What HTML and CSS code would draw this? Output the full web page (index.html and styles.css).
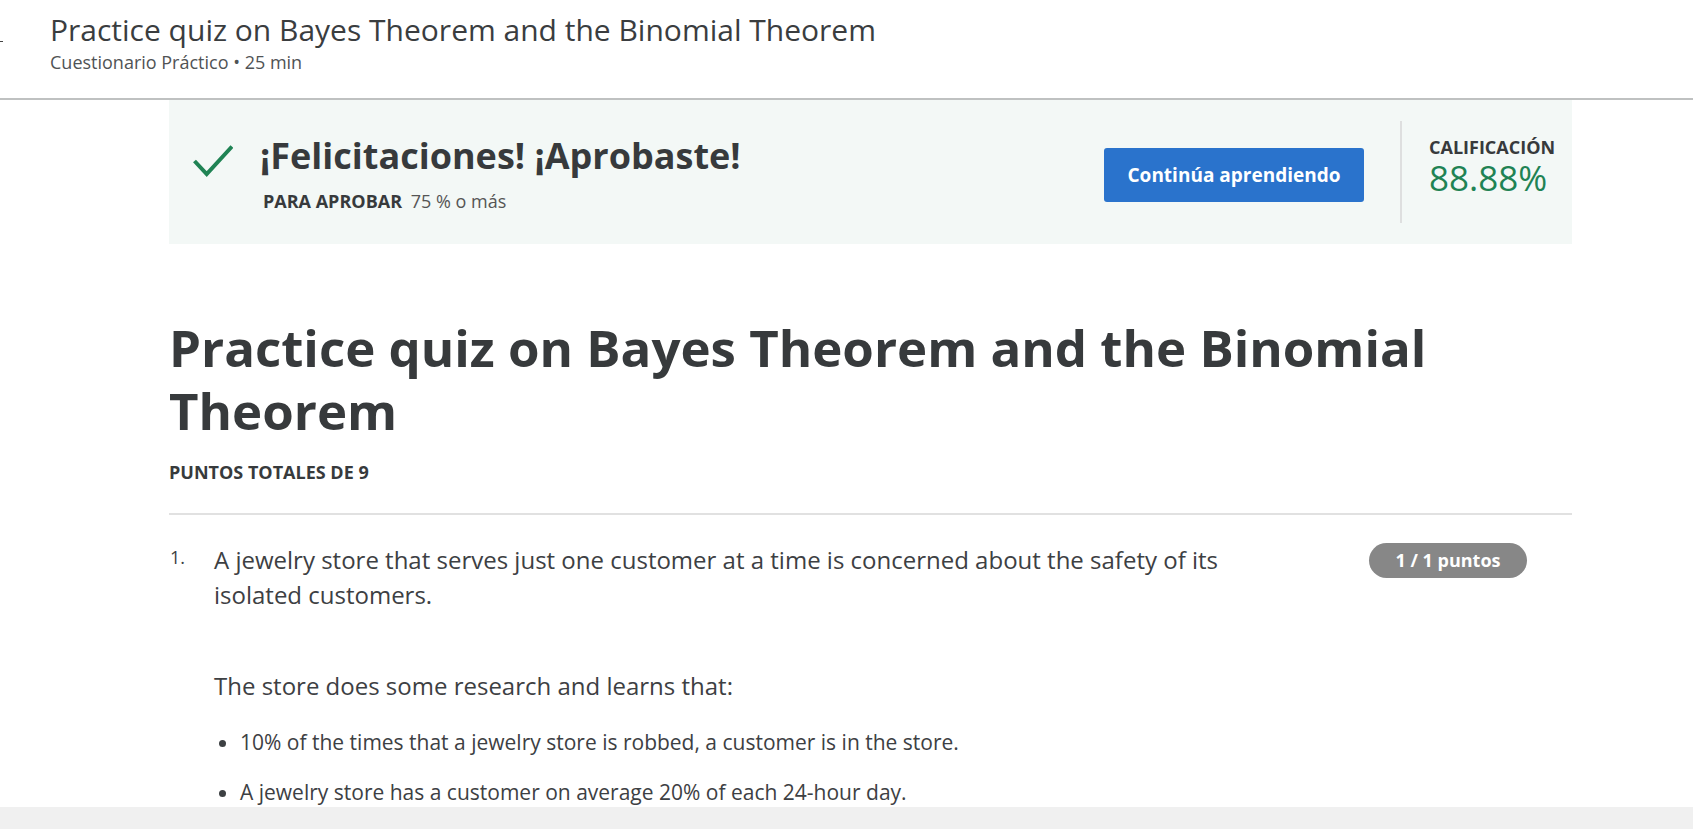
FILE: index.html
```html
<!DOCTYPE html>
<html lang="es">
<head>
<meta charset="utf-8">
<title>Practice quiz on Bayes Theorem and the Binomial Theorem</title>
<link rel="stylesheet" href="styles.css">
</head>
<body>
<div class="page">
  <header class="topbar">
    <span class="back-stub"></span>
    <div class="topbar-text">
      <h2 class="topbar-title">Practice quiz on Bayes Theorem and the Binomial Theorem</h2>
      <div class="topbar-sub">Cuestionario Práctico • 25 min</div>
    </div>
  </header>

  <main class="content">
    <section class="banner">
      <div class="banner-main">
        <svg class="check" width="40" height="32" viewBox="0 0 40 32" aria-hidden="true">
          <polyline points="1.5,16 13.7,29 39,1.5" fill="none" stroke="#1f8354" stroke-width="4"/>
        </svg>
        <div class="banner-text">
          <h3 class="banner-title">¡Felicitaciones! ¡Aprobaste!</h3>
          <div class="banner-pass"><span class="pass-label">PARA APROBAR</span> 75 % o más</div>
        </div>
      </div>
      <button class="btn-primary" type="button">Continúa aprendiendo</button>
      <div class="banner-divider"></div>
      <div class="grade">
        <div class="grade-label">CALIFICACIÓN</div>
        <div class="grade-value">88.88%</div>
      </div>
    </section>

    <h1 class="quiz-title">Practice quiz on Bayes Theorem and the Binomial Theorem</h1>
    <div class="total-points">PUNTOS TOTALES DE 9</div>
    <hr class="rule">

    <div class="question">
      <div class="q-num">1.</div>
      <div class="q-body">
        <p class="q-text">A jewelry store that serves just one customer at a time is concerned about the safety of its isolated customers.</p>
        <p class="q-text q-para">The store does some research and learns that:</p>
        <ul class="q-list">
          <li>10% of the times that a jewelry store is robbed, a customer is in the store.</li>
          <li>A jewelry store has a customer on average 20% of each 24-hour day.</li>
        </ul>
      </div>
      <div class="q-badge">1 / 1 puntos</div>
    </div>
  </main>

  <footer class="bottom-bar"></footer>
</div>
</body>
</html>
```

FILE: styles.css
```css
* { box-sizing: border-box; }

html, body {
  margin: 0;
  padding: 0;
  height: 100%;
}

body {
  font-family: "Open Sans", "Noto Sans", sans-serif;
  color: #373a3c;
  background: #fff;
  overflow: hidden;
}

.page {
  height: 100vh;
  display: flex;
  flex-direction: column;
}

/* Top bar */
.topbar {
  flex: none;
  height: 100px;
  border-bottom: 2px solid #bfc1c1;
  display: flex;
  align-items: flex-start;
}

.back-stub {
  width: 3px;
  height: 1px;
  background: #444;
  margin-top: 41px;
}

.topbar-text {
  margin-left: 47px;
  padding-top: 12px;
}

.topbar-title {
  margin: 0;
  font-size: 30px;
  line-height: 36px;
  font-weight: 400;
  color: #3a3d3f;
}

.topbar-sub {
  margin-top: 3px;
  font-size: 18px;
  line-height: 22px;
  color: #505355;
}

/* Content column */
.content {
  flex: 1;
  overflow: hidden;
  width: 1403px;
  margin-left: 169px;
}

/* Banner */
.banner {
  height: 144px;
  background: #f3f8f6;
  display: flex;
  align-items: center;
  padding-left: 24px;
}

.banner-main {
  flex: 1;
  display: flex;
  align-items: flex-start;
}

.check {
  flex: none;
  margin-top: 12px;
}

.banner-text {
  margin-left: 27px;
}

.banner-title {
  margin: 0;
  font-size: 36px;
  line-height: 46px;
  font-weight: 700;
  color: #373a3c;
}

.banner-pass {
  margin-top: 11px;
  padding-left: 3px;
  font-size: 18px;
  line-height: 22px;
  color: #555;
}

.pass-label {
  font-weight: 700;
  color: #373a3c;
  margin-right: 4px;
}

.btn-primary {
  flex: none;
  width: 260px;
  height: 54px;
  margin-top: 6px;
  border: none;
  border-radius: 3px;
  background: #2a73cc;
  color: #fff;
  font-family: inherit;
  font-size: 19px;
  font-weight: 700;
}

.banner-divider {
  flex: none;
  width: 2px;
  height: 102px;
  margin-left: 36px;
  background: #dedfdf;
}

.grade {
  flex: none;
  width: 170px;
  padding-left: 27px;
  padding-bottom: 11px;
}

.grade-label {
  font-size: 18px;
  line-height: 22px;
  font-weight: 700;
  color: #373a3c;
}

.grade-value {
  font-size: 35px;
  line-height: 40px;
  color: #1f8354;
}

/* Title */
.quiz-title {
  margin: 72px 0 0;
  font-size: 51px;
  line-height: 63px;
  font-weight: 700;
  color: #373a3c;
}

.total-points {
  margin-top: 20px;
  font-size: 18px;
  line-height: 20px;
  font-weight: 700;
  color: #373a3c;
}

.rule {
  margin: 31px 0 0;
  border: none;
  height: 2px;
  background: #e1e1e1;
}

/* Question */
.question {
  display: flex;
  align-items: flex-start;
  margin-top: 27px;
}

.q-num {
  flex: none;
  width: 45px;
  padding-left: 1px;
  font-size: 18px;
  line-height: 30px;
  color: #3d4043;
}

.q-body {
  flex: none;
  width: 1060px;
}

.q-text {
  margin: 0;
  font-size: 24px;
  line-height: 35px;
  color: #3d4043;
}

.q-para {
  margin-top: 56px;
}

.q-list {
  margin: 14px 0 0;
  padding-left: 26px;
  font-size: 21px;
  line-height: 50px;
  color: #3d4043;
}

.q-badge {
  flex: none;
  margin-left: auto;
  margin-right: 45px;
  margin-top: 1px;
  width: 158px;
  height: 35px;
  border-radius: 18px;
  background: #878787;
  color: #fff;
  font-size: 18px;
  font-weight: 700;
  line-height: 35px;
  text-align: center;
}

/* Bottom bar */
.bottom-bar {
  flex: none;
  height: 22px;
  background: #f0f0f0;
}
```
